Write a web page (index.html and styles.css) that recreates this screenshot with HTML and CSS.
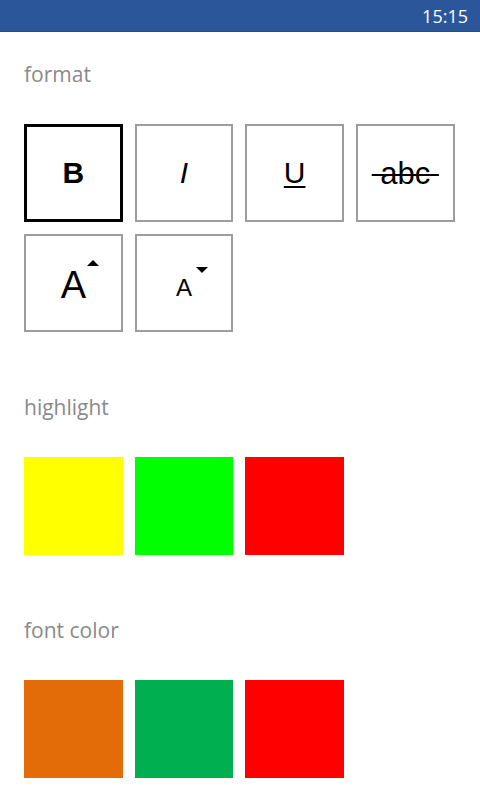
FILE: index.html
```html
<!DOCTYPE html>
<html>
<head>
<meta charset="utf-8">
<link rel="stylesheet" href="styles.css">
</head>
<body>
<div class="status"><span class="time">15:15</span></div>
<main class="content">
  <section class="section first">
    <h2 class="label">format</h2>
    <div class="grid">
      <div class="btn selected"><span class="g bold">B</span></div>
      <div class="btn"><span class="g italic">I</span></div>
      <div class="btn"><span class="g under">U</span></div>
      <div class="btn"><span class="g strike">&nbsp;abc&nbsp;</span></div>
      <div class="btn"><span class="grow">A<span class="tri up"></span></span></div>
      <div class="btn"><span class="shrink">A<span class="tri down"></span></span></div>
    </div>
  </section>
  <section class="section">
    <h2 class="label">highlight</h2>
    <div class="grid">
      <div class="swatch yellow"></div>
      <div class="swatch lime"></div>
      <div class="swatch red"></div>
    </div>
  </section>
  <section class="section">
    <h2 class="label">font color</h2>
    <div class="grid">
      <div class="swatch orange"></div>
      <div class="swatch green"></div>
      <div class="swatch red"></div>
    </div>
  </section>
</main>
</body>
</html>
```
FILE: styles.css
```css
html, body {
  margin: 0;
  padding: 0;
  background: #fff;
}
body {
  width: 480px;
  height: 800px;
  overflow: hidden;
  font-family: "Open Sans", "Noto Sans", sans-serif;
}
.status {
  height: 31px;
  background: #2b579a;
  border-bottom: 1px solid #234f8f;
  display: flex;
  justify-content: flex-end;
  align-items: center;
  padding-right: 12px;
}
.time {
  color: #fff;
  font-size: 18px;
  line-height: 20px;
  margin-top: 1px;
}
.content {
  padding-left: 24px;
}
.section {
  margin-top: 61px;
}
.section.first {
  margin-top: 28px;
}
.label {
  margin: 0 0 36px 0;
  font-size: 21px;
  line-height: 28px;
  font-weight: 400;
  color: #8a8a8a;
}
.grid {
  display: grid;
  grid-template-columns: repeat(4, 98.67px);
  grid-auto-rows: 98px;
  column-gap: 12px;
  row-gap: 12px;
}
.btn {
  box-sizing: border-box;
  border: 2px solid #9c9c9c;
  display: flex;
  align-items: center;
  justify-content: center;
  font-family: "Liberation Sans", Arial, sans-serif;
  color: #000;
}
.btn.selected {
  border: 3px solid #000;
}
.g {
  font-size: 30px;
  line-height: 1;
}
.bold {
  font-weight: 700;
}
.italic {
  font-style: italic;
  font-size: 30px;
}
.under {
  text-decoration: underline;
  text-decoration-thickness: 2px;
  text-underline-offset: 3px;
}
.strike {
  font-size: 31px;
  text-decoration: line-through;
  text-decoration-thickness: 2px;
}
.grow, .shrink {
  position: relative;
  line-height: 1;
}
.grow {
  font-size: 38px;
  margin-top: 4px;
}
.shrink {
  font-size: 24px;
  margin-top: 10px;
}
.tri {
  position: absolute;
  width: 0;
  height: 0;
  border-left: 6px solid transparent;
  border-right: 6px solid transparent;
}
.tri.up {
  border-bottom: 6px solid #000;
  left: 100%;
  margin-left: 1px;
  top: -6px;
}
.tri.down {
  border-top: 6px solid #000;
  left: 100%;
  margin-left: 4px;
  top: -9px;
}
.swatch {
  width: 98.67px;
  height: 98px;
}
.yellow { background: #ffff00; }
.lime { background: #00ff00; }
.red { background: #ff0000; }
.orange { background: #e36c09; }
.green { background: #00b050; }
```
